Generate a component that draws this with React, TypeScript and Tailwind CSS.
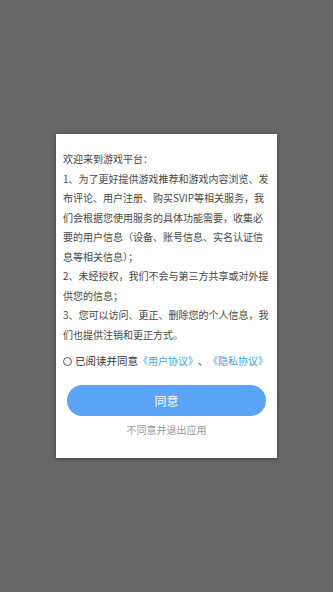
import { useState } from "react";

const FONT = { fontFamily: '"Noto Sans CJK SC", "Noto Sans", sans-serif' };

const paragraphs = [
  "欢迎来到游戏平台：",
  "1、为了更好提供游戏推荐和游戏内容浏览、发布评论、用户注册、购买SVIP等相关服务，我们会根据您使用服务的具体功能需要，收集必要的用户信息（设备、账号信息、实名认证信息等相关信息）；",
  "2、未经授权，我们不会与第三方共享或对外提供您的信息；",
  "3、您可以访问、更正、删除您的个人信息，我们也提供注销和更正方式。",
];

export default function App() {
  const [agreed, setAgreed] = useState(false);

  return (
    <div className="flex h-[592px] w-full items-center justify-center bg-[#666666]" style={FONT}>
      <div className="flex h-[324px] w-[221px] flex-col bg-white px-[7px] pt-[15px] shadow-[0_1px_4px_rgba(0,0,0,0.35)]">
        <div className="text-[10px] leading-[19.5px] text-[#484848]">
          {paragraphs.map((p, i) => (
            <p key={i}>{p}</p>
          ))}
        </div>

        <button
          type="button"
          onClick={() => setAgreed(!agreed)}
          className="mt-[7px] flex items-center whitespace-nowrap leading-[20px]"
        >
          <span
            className={`mr-[3px] h-[9px] w-[9px] shrink-0 rounded-full border border-[#555555] ${
              agreed ? "bg-[#5aa5f7]" : "bg-white"
            }`}
          />
          <span className="text-[10.5px] text-[#333333]">已阅读并同意</span>
          <span className="text-[10px] text-[#4a9be6]">《用户协议》</span>
          <span className="text-[10px] text-[#333333]">、</span>
          <span className="text-[10px] text-[#4a9be6]">《隐私协议》</span>
        </button>

        <button
          type="button"
          className="mx-auto mt-[14px] h-[31px] w-[199px] rounded-full bg-[#5aa5f7] text-[12px] text-white"
        >
          同意
        </button>

        <div className="mt-[6px] text-center text-[10px] leading-[16px] text-[#999999]">不同意并退出应用</div>
      </div>
    </div>
  );
}
